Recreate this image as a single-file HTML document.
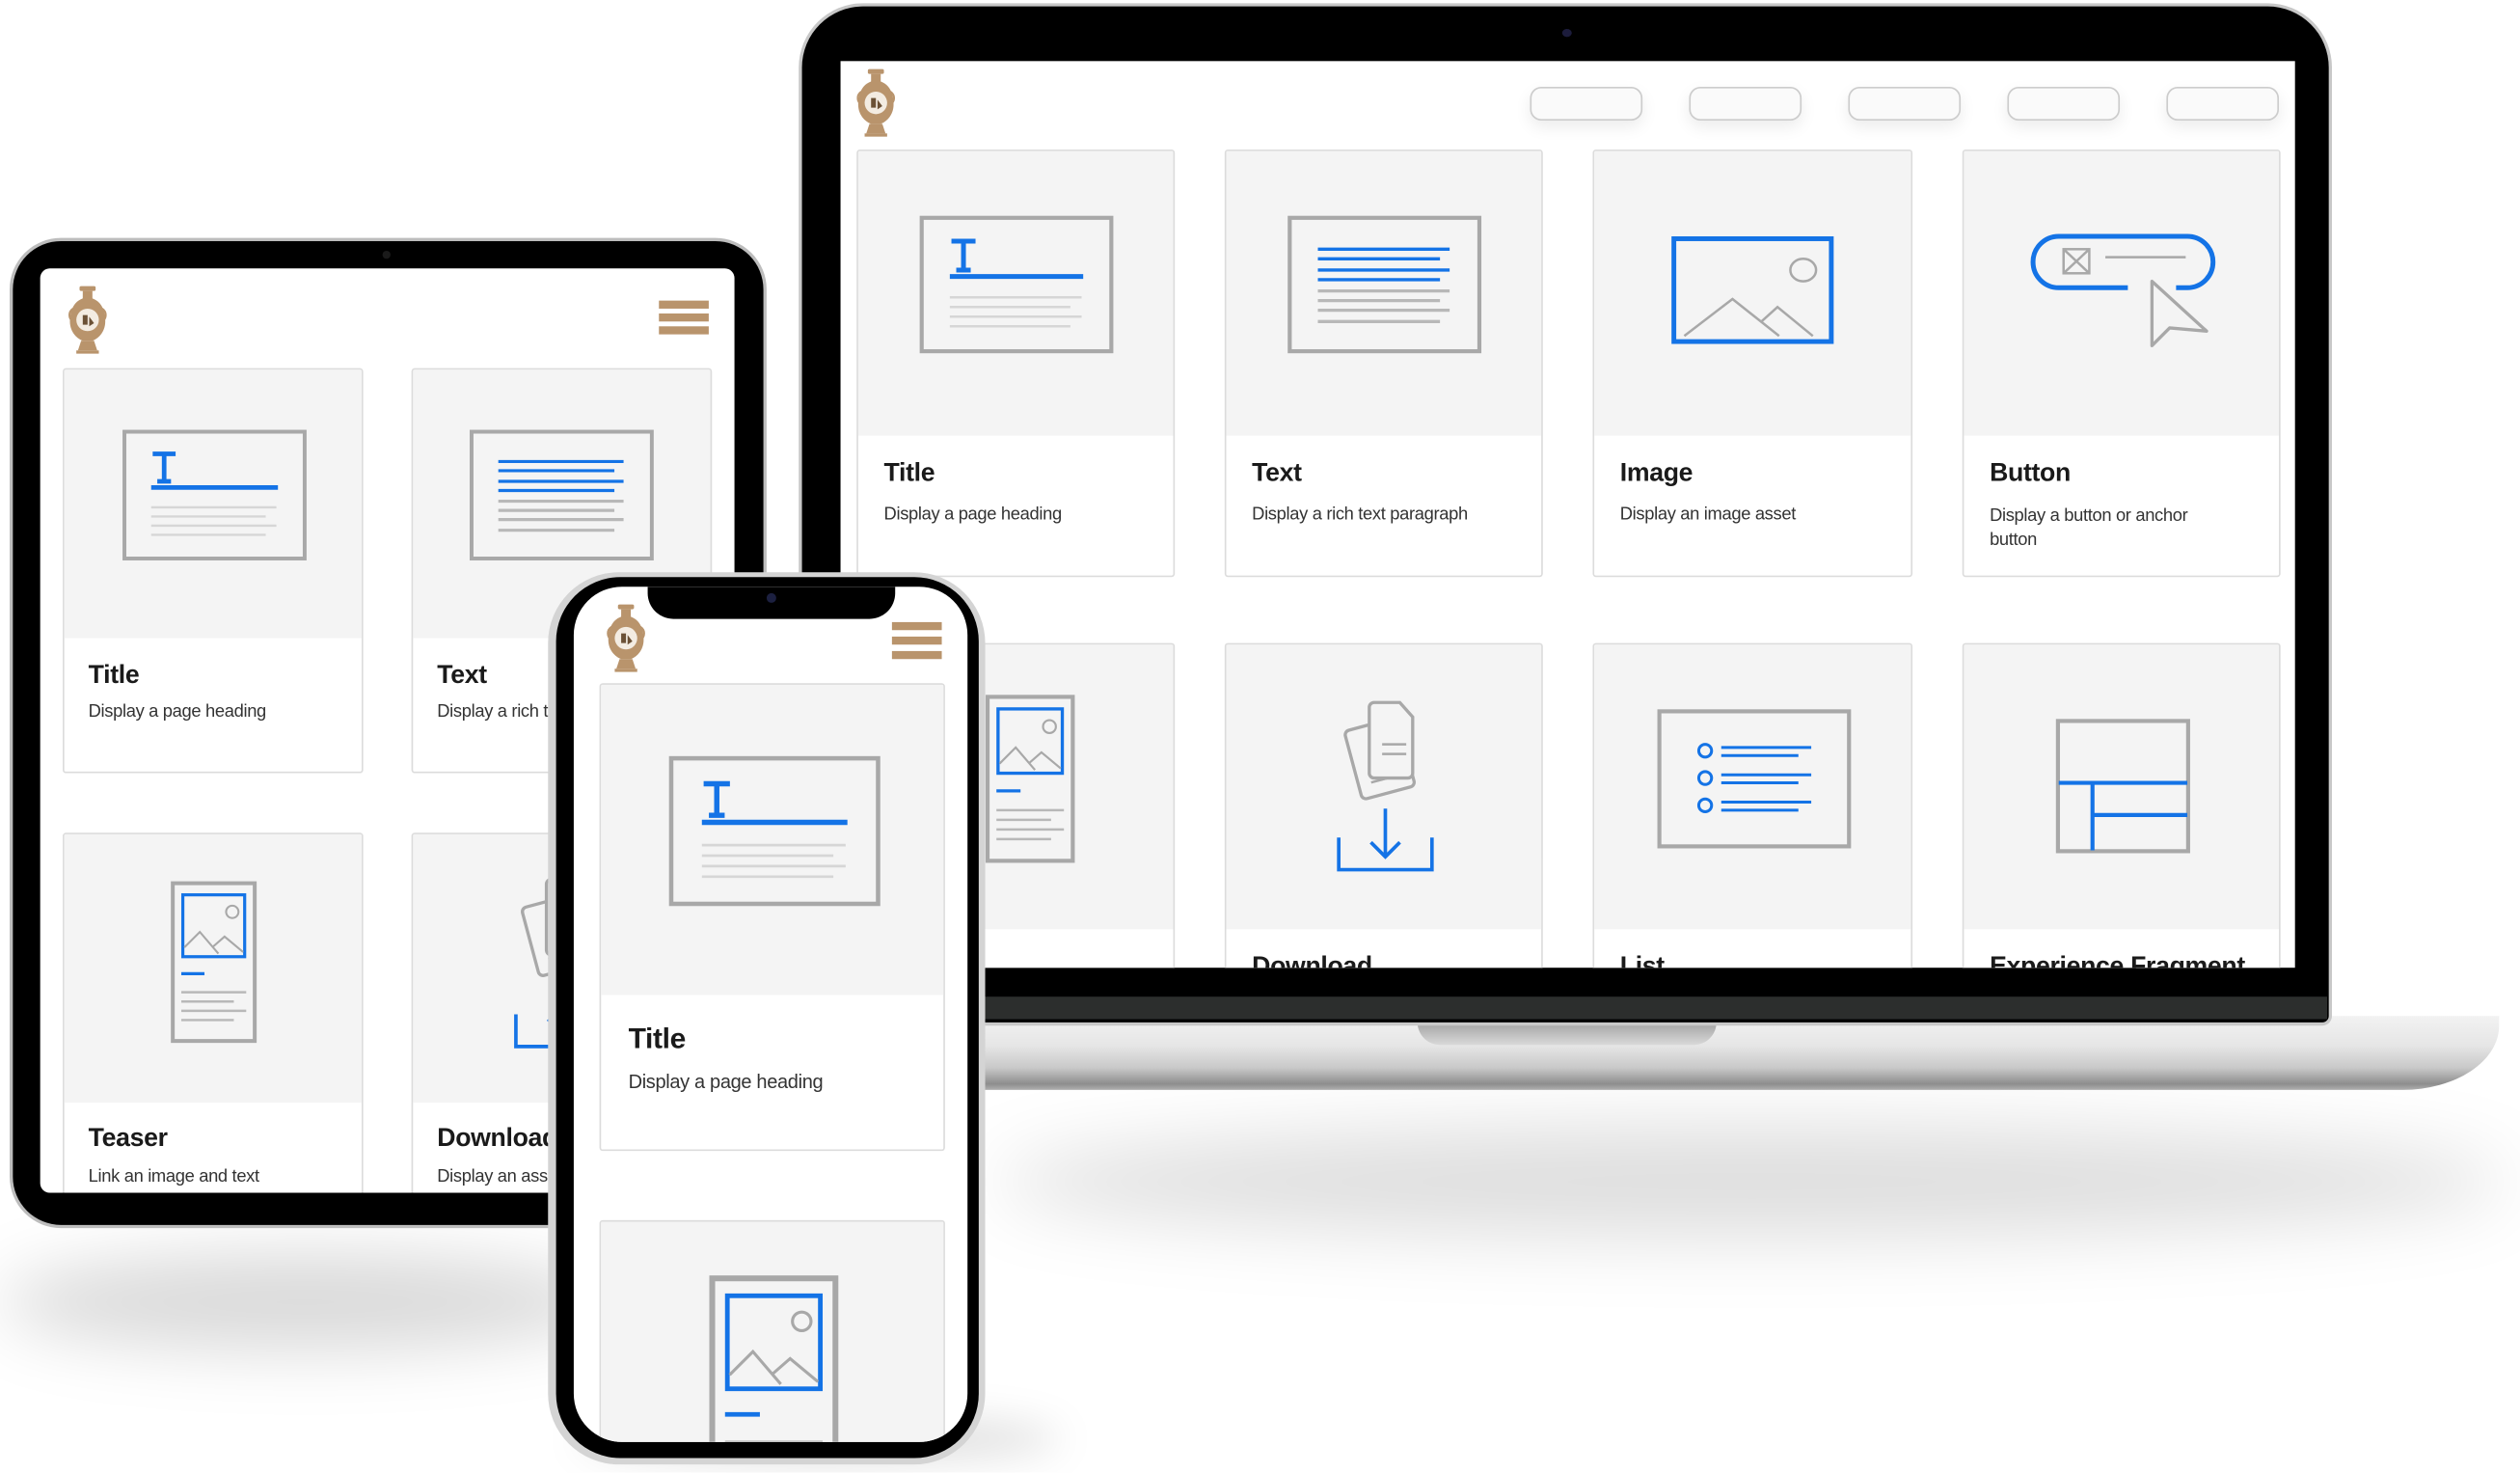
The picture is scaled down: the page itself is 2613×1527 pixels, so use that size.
<!DOCTYPE html>
<html><head><meta charset="utf-8">
<style>
html,body{margin:0;padding:0;width:2613px;height:1527px;overflow:hidden;background:#fff}
#w{position:absolute;left:0;top:0;width:1568px;height:916px;overflow:hidden;transform:scale(1.66645,1.66645);transform-origin:0 0;font-family:"Liberation Sans",sans-serif}
.a{position:absolute}
.card{position:absolute;background:#fff;border:1px solid #dcdcdc;border-radius:2px;overflow:hidden;box-sizing:border-box}
.card .top{position:absolute;left:0;top:0;right:0;background:#f4f4f4}
.card svg{position:absolute}
.t{position:absolute;font-weight:bold;color:#1a1a1a;white-space:nowrap;letter-spacing:-0.2px}
.d{position:absolute;color:#333;white-space:nowrap;letter-spacing:-0.2px}
.pill{position:absolute;top:54px;width:70px;height:21px;border:1px solid #ccc;border-radius:7px;background:#fafafa;box-shadow:0 4px 10px rgba(0,0,0,0.08);box-sizing:border-box}
.hb{position:absolute;width:31px;height:5px;background:#b9946c}
</style></head><body>
<svg width="0" height="0" style="position:absolute">
<defs>
<symbol id="ttl" viewBox="0 0 121 86"><rect x="1.5" y="1.5" width="118" height="83" fill="#f4f4f4" stroke="#a8a8a8" stroke-width="2.5"/><path d="M20 16h15M27.5 16v18M23 34h9" stroke="#1473e6" stroke-width="3" fill="none"/><path d="M19 38h83" stroke="#1473e6" stroke-width="3"/><path d="M19 51h82M19 57h75M19 63h82M19 69h75" stroke="#d6d6d6" stroke-width="1.5"/></symbol>
<symbol id="txt" viewBox="0 0 121 86"><rect x="1.5" y="1.5" width="118" height="83" fill="#f4f4f4" stroke="#a8a8a8" stroke-width="2.5"/><path d="M19 21h82M19 27h76M19 34h82M19 40h76" stroke="#1473e6" stroke-width="2"/><path d="M19 47h82M19 53h76M19 59h82M19 66h76" stroke="#b8b8b8" stroke-width="2"/></symbol>
<symbol id="img" viewBox="0 0 101 67"><rect x="1.5" y="1.5" width="98" height="64" fill="none" stroke="#1473e6" stroke-width="3"/><path d="M8 62L38 39L67 62M56 53L66 44L88 62" stroke="#a8a8a8" stroke-width="1.5" fill="none"/><ellipse cx="82" cy="21" rx="8" ry="7" fill="none" stroke="#a8a8a8" stroke-width="1.5"/></symbol>
<symbol id="btn" viewBox="0 0 119 72"><path d="M62 34H19a16 16 0 0 1 0-32H99a16 16 0 0 1 0 32H92" fill="none" stroke="#1473e6" stroke-width="3"/><rect x="22" y="10" width="16" height="15" fill="none" stroke="#a8a8a8" stroke-width="1.5"/><path d="M22 10L38 25M38 10L22 25M48 15H98" stroke="#a8a8a8" stroke-width="1.5"/><path d="M77 30L77 70L88 59L111 61Z" fill="none" stroke="#a8a8a8" stroke-width="2" stroke-linejoin="round"/></symbol>
<symbol id="tsr" viewBox="0 0 56 105"><rect x="1.5" y="1.5" width="53" height="102" fill="#f4f4f4" stroke="#a8a8a8" stroke-width="2.5"/><rect x="8" y="9" width="40" height="40" fill="none" stroke="#1473e6" stroke-width="2"/><path d="M9 43L19 33L31 47M27 43L35 36L47 46" stroke="#a8a8a8" stroke-width="1.3" fill="none"/><circle cx="40" cy="20" r="4" fill="none" stroke="#a8a8a8" stroke-width="1.3"/><path d="M7 60H22" stroke="#1473e6" stroke-width="2"/><path d="M7 72H49M7 78H41M7 84H49M7 90H41" stroke="#b8b8b8" stroke-width="1.5"/></symbol>
<symbol id="dl" viewBox="0 0 62 110"><g transform="rotate(-15 22 30)"><rect x="8" y="18" width="34" height="44" rx="3" fill="#f4f4f4" stroke="#a8a8a8" stroke-width="2"/><path d="M16 48H32M16 53H30" stroke="#a8a8a8" stroke-width="1.5"/></g><path d="M24 4h16l8 9v35a3 3 0 0 1-3 3H24a3 3 0 0 1-3-3V7a3 3 0 0 1 3-3z" fill="#f4f4f4" stroke="#a8a8a8" stroke-width="2"/><path d="M29 30H44M29 36H44" stroke="#a8a8a8" stroke-width="1.5"/><path d="M31 70V100M22 91L31 100L40 91" stroke="#1473e6" stroke-width="2.2" fill="none"/><path d="M2 88V108H60V88" stroke="#1473e6" stroke-width="2.2" fill="none"/></symbol>
<symbol id="lst" viewBox="0 0 121 87"><rect x="1.5" y="1.5" width="118" height="84" fill="#f4f4f4" stroke="#a8a8a8" stroke-width="2.5"/><g stroke="#1473e6" stroke-width="1.8" fill="none"><circle cx="30" cy="26" r="4"/><circle cx="30" cy="43" r="4"/><circle cx="30" cy="60" r="4"/><path d="M40 24H96M40 29H88M40 41H96M40 46H88M40 58H96M40 63H88"/></g></symbol>
<symbol id="xf" viewBox="0 0 84 84"><rect x="1.5" y="1.5" width="81" height="81" fill="#f4f4f4" stroke="#a8a8a8" stroke-width="2.5"/><path d="M2 40H82M23 40V82M23 60H82" stroke="#1473e6" stroke-width="2.5" fill="none"/></symbol>
<symbol id="vase" viewBox="0 0 24 44"><g fill="#b9946c"><rect x="7" y="1" width="10" height="3" rx="1"/><path d="M9 4h6v5h-6z"/><path d="M12 8C3 9 1 17 1 23c0 7 5 11 8 12h6c3-1 8-5 8-12 0-6-2-14-11-15z"/><path d="M8 35h8l2 6H6z"/><rect x="5" y="41" width="14" height="2"/></g><circle cx="12" cy="22" r="7" fill="#f3ece2"/><path d="M9 19h3v6h-3zM13 20l3 4-3 2" fill="#6b5136"/><path d="M3 15c-3 2-3 6 0 8M21 15c3 2 3 6 0 8" stroke="#b9946c" stroke-width="1.3" fill="none"/></symbol>
</defs></svg>

<div id="w">
<div class="a" style="left:620px;top:700px;width:940px;height:70px;border-radius:50%;background:rgba(0,0,0,0.13);filter:blur(22px)"></div>
<div class="a" style="left:0;top:780px;width:380px;height:60px;border-radius:50%;background:rgba(0,0,0,0.15);filter:blur(20px)"></div>
<div class="a" style="left:360px;top:880px;width:300px;height:30px;border-radius:50%;background:rgba(0,0,0,0.12);filter:blur(12px)"></div>

<div class="a" style="left:600px;top:632px;width:955px;height:46px;border-radius:0 0 60px 8px/0 0 40px 8px;background:linear-gradient(#f2f2f2 0%,#e6e6e6 40%,#c9c9c9 70%,#8d8d8d 92%,#b0b0b0 100%)"></div>
<div class="a" style="left:882px;top:634px;width:186px;height:16px;border-radius:0 0 14px 14px;background:linear-gradient(#9a9a9a,#d9d9d9)"></div>
<div class="a" style="left:499px;top:4px;width:950px;height:632px;border-radius:38px 38px 4px 4px;background:#000;box-shadow:0 0 0 2px #c8c8c8"></div>
<div class="a" style="left:500px;top:620px;width:948px;height:14px;background:#2c2e2d"></div>
<div class="a" style="left:972px;top:18px;width:6px;height:5px;border-radius:50%;background:#1c1c3c"></div>
<div class="a" style="left:523px;top:38px;width:905px;height:564px;background:#fff;overflow:hidden">
  <svg class="a" style="left:10px;top:4px" width="24" height="44"><use href="#vase"/></svg>
  <div class="pill" style="left:429px;top:16px"></div><div class="pill" style="left:528px;top:16px"></div><div class="pill" style="left:627px;top:16px"></div><div class="pill" style="left:726px;top:16px"></div><div class="pill" style="left:825px;top:16px"></div>
  <div class="card" style="left:10px;top:55px;width:198px;height:266px"><div class="top" style="height:177px"></div><svg style="left:38px;top:40px" width="121" height="86"><use href="#ttl"/></svg><div class="t" style="left:16px;top:192px;font-size:16px">Title</div><div class="d" style="left:16px;top:220px;font-size:11px">Display a page heading</div></div>
  <div class="card" style="left:239px;top:55px;width:198px;height:266px"><div class="top" style="height:177px"></div><svg style="left:38px;top:40px" width="121" height="86"><use href="#txt"/></svg><div class="t" style="left:16px;top:192px;font-size:16px">Text</div><div class="d" style="left:16px;top:220px;font-size:11px">Display a rich text paragraph</div></div>
  <div class="card" style="left:468px;top:55px;width:199px;height:266px"><div class="top" style="height:177px"></div><svg style="left:48px;top:53px" width="101" height="67"><use href="#img"/></svg><div class="t" style="left:16px;top:192px;font-size:16px">Image</div><div class="d" style="left:16px;top:220px;font-size:11px">Display an image asset</div></div>
  <div class="card" style="left:698px;top:55px;width:198px;height:266px"><div class="top" style="height:177px"></div><svg style="left:40px;top:51px" width="119" height="72"><use href="#btn"/></svg><div class="t" style="left:16px;top:192px;font-size:16px">Button</div><div class="d" style="left:16px;top:220px;font-size:11px;line-height:15px">Display a button or anchor<br>button</div></div>
  <div class="card" style="left:10px;top:362px;width:198px;height:266px"><div class="top" style="height:177px"></div><svg style="left:79px;top:31px" width="56" height="105"><use href="#tsr"/></svg><div class="t" style="left:16px;top:192px;font-size:16px">Teaser</div></div>
  <div class="card" style="left:239px;top:362px;width:198px;height:266px"><div class="top" style="height:177px"></div><svg style="left:68px;top:32px" width="62" height="110"><use href="#dl"/></svg><div class="t" style="left:16px;top:192px;font-size:16px">Download</div></div>
  <div class="card" style="left:468px;top:362px;width:199px;height:266px"><div class="top" style="height:177px"></div><svg style="left:39px;top:40px" width="121" height="87"><use href="#lst"/></svg><div class="t" style="left:16px;top:192px;font-size:16px">List</div></div>
  <div class="card" style="left:698px;top:362px;width:198px;height:266px"><div class="top" style="height:177px"></div><svg style="left:57px;top:46px" width="84" height="84"><use href="#xf"/></svg><div class="t" style="left:16px;top:192px;font-size:16px">Experience Fragment</div></div>
</div>

<div class="a" style="left:8px;top:150px;width:467px;height:612px;border-radius:30px;background:#000;box-shadow:0 0 0 2px #bdbdbd"></div>
<div class="a" style="left:238px;top:156px;width:5px;height:5px;border-radius:50%;background:#1a1a1a"></div>
<div class="a" style="left:25px;top:167px;width:432px;height:575px;background:#fff;overflow:hidden;border-radius:6px">
  <svg class="a" style="left:17px;top:10px" width="25" height="44"><use href="#vase"/></svg>
  <div class="hb" style="left:385px;top:20px"></div><div class="hb" style="left:385px;top:28px"></div><div class="hb" style="left:385px;top:36px"></div>
  <div class="card" style="left:14px;top:62px;width:187px;height:252px"><div class="top" style="height:167px"></div><svg style="left:36px;top:37px" width="115" height="82"><use href="#ttl"/></svg><div class="t" style="left:15px;top:182px;font-size:16px">Title</div><div class="d" style="left:15px;top:207px;font-size:11px">Display a page heading</div></div>
  <div class="card" style="left:231px;top:62px;width:187px;height:252px"><div class="top" style="height:167px"></div><svg style="left:35px;top:37px" width="115" height="82"><use href="#txt"/></svg><div class="t" style="left:15px;top:182px;font-size:16px">Text</div><div class="d" style="left:15px;top:207px;font-size:11px">Display a rich text paragraph</div></div>
  <div class="card" style="left:14px;top:351px;width:187px;height:252px"><div class="top" style="height:167px"></div><svg style="left:57px;top:29px" width="72" height="101"><use href="#tsr"/></svg><div class="t" style="left:15px;top:181px;font-size:16px">Teaser</div><div class="d" style="left:15px;top:207px;font-size:11px">Link an image and text</div></div>
  <div class="card" style="left:231px;top:351px;width:187px;height:252px"><div class="top" style="height:167px"></div><svg style="left:62px;top:24px" width="62" height="110"><use href="#dl"/></svg><div class="t" style="left:15px;top:181px;font-size:16px">Download</div><div class="d" style="left:15px;top:207px;font-size:11px">Display an asset to download</div></div>
</div>

<div class="a" style="left:341px;top:356px;width:272px;height:555px;border-radius:44px;background:#d4d4d4"></div>
<div class="a" style="left:346px;top:359px;width:263px;height:548px;border-radius:40px;background:#000"></div>
<div class="a" style="left:357px;top:365px;width:245px;height:532px;background:#fff;overflow:hidden;border-radius:30px">
  <svg class="a" style="left:20px;top:10px" width="25" height="44"><use href="#vase"/></svg>
  <div class="hb" style="left:198px;top:22px"></div><div class="hb" style="left:198px;top:31px"></div><div class="hb" style="left:198px;top:40px"></div>
  <div class="card" style="left:16px;top:60px;width:215px;height:291px"><div class="top" style="height:193px"></div><svg style="left:42px;top:44px" width="132" height="94"><use href="#ttl"/></svg><div class="t" style="left:17px;top:210px;font-size:18px">Title</div><div class="d" style="left:17px;top:240px;font-size:12px">Display a page heading</div></div>
  <div class="card" style="left:16px;top:394px;width:215px;height:291px"><div class="top" style="height:193px"></div><svg style="left:67px;top:33px" width="81" height="152"><use href="#tsr"/></svg></div>
  <div class="a" style="left:46px;top:0;width:154px;height:20px;background:#000;border-radius:0 0 16px 16px"></div>
  <div class="a" style="left:120px;top:4px;width:6px;height:6px;border-radius:50%;background:#1c2040"></div>
</div>
</div>
</body></html>
